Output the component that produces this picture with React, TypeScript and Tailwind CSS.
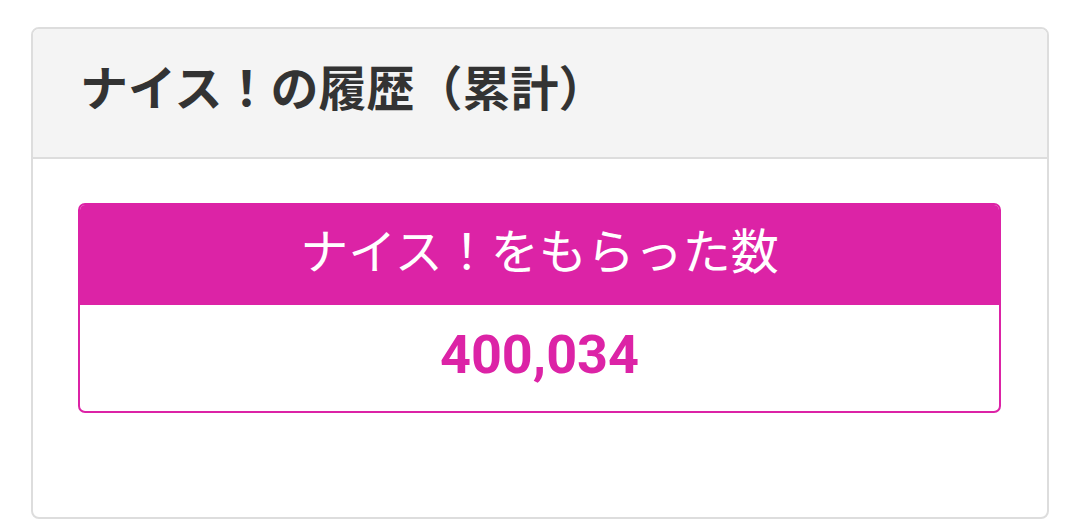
const App = () => {
  return (
    <div className="w-[1080px] h-[519px] bg-white overflow-hidden pt-[27px] pl-[31px]">
      <div className="w-[1018px] h-[492px] border-2 border-[#dddddd] rounded-[8px] overflow-hidden bg-white">
        <div className="h-[130px] bg-[#f4f4f4] border-b-2 border-[#dddddd] flex items-center pl-[47px] pb-[16px]">
          <h2 className="text-[48px] font-bold text-[#333333] leading-none font-['Noto_Sans_CJK_JP',sans-serif]">
            ナイス！の履歴（累計）
          </h2>
        </div>
        <div className="pt-[44px] pl-[45px]">
          <div className="w-[923px] rounded-[7px] overflow-hidden border-2 border-[#dc23a6]">
            <div className="h-[100px] bg-[#dc23a6] flex items-center justify-center pb-[14px]">
              <span className="text-[48px] text-white leading-none font-['Noto_Sans_CJK_JP',sans-serif]">
                ナイス！をもらった数
              </span>
            </div>
            <div className="h-[106px] flex items-center justify-center pb-[6px]">
              <span className="text-[54px] font-bold text-[#dc23a6] leading-none font-['Roboto',sans-serif]">
                400,034
              </span>
            </div>
          </div>
        </div>
      </div>
    </div>
  );
};

export default App;
